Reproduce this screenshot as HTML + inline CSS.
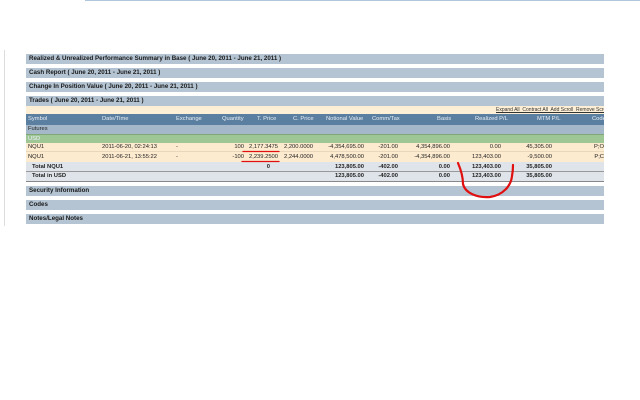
<!DOCTYPE html>
<html><head><meta charset="utf-8"><style>
*{margin:0;padding:0;box-sizing:border-box}
body{width:640px;height:400px;background:#fff;position:relative;overflow:hidden;font-family:"Liberation Sans",Arial,sans-serif;font-size:5.8px;color:#222}
.a{position:absolute}
.bar{position:absolute;left:26px;width:578px;height:10px;background:#b4c4d2;font-weight:bold;font-size:6.2px;line-height:10px;padding-left:3px;color:#1a1a1a}
.row{position:absolute;left:26px;width:578px}
.c{position:absolute;top:0;white-space:nowrap}
.r{text-align:right}
</style></head><body>
<div class="a" style="left:85px;top:0;width:555px;height:1px;background:#b0c6de"></div>
<div class="a" style="left:4px;top:50px;width:1px;height:176px;background:#ddd"></div>

<div class="bar" style="top:54px">Realized &amp; Unrealized Performance Summary in Base ( June 20, 2011 - June 21, 2011 )</div>
<div class="bar" style="top:68px">Cash Report ( June 20, 2011 - June 21, 2011 )</div>
<div class="bar" style="top:82px">Change In Position Value ( June 20, 2011 - June 21, 2011 )</div>
<div class="bar" style="top:96px">Trades ( June 20, 2011 - June 21, 2011 )</div>

<div class="row" style="top:106px;height:8px;background:#fdefd6"></div>
<div class="a" style="top:107px;left:496px;width:108px;overflow:hidden;font-size:5px;color:#333;text-decoration:underline;white-space:nowrap">Expand All&nbsp; Contract All&nbsp; Add Scroll&nbsp; Remove Scroll</div>

<div class="row" style="top:114px;height:11px;background:#5b7fa0;color:#e8eef4;line-height:11px">
<span class="c" style="left:2px">Symbol</span>
<span class="c" style="left:76px">Date/Time</span>
<span class="c" style="left:150px">Exchange</span>
<span class="c" style="left:196px">Quantity</span>
<span class="c" style="left:231px">T. Price</span>
<span class="c" style="left:267px">C. Price</span>
<span class="c" style="left:300px">Notional Value</span>
<span class="c" style="left:346px">Comm/Tax</span>
<span class="c" style="left:411px">Basis</span>
<span class="c" style="left:449px">Realized P/L</span>
<span class="c" style="left:511px">MTM P/L</span>
<span class="c" style="left:566px">Code</span>
</div>
<div class="row" style="top:125px;height:9px;background:#a4b8ca;line-height:9px"><span class="c" style="left:2px">Futures</span></div>
<div class="row" style="top:134px;height:9px;background:#9ec795;border-top:1px solid #7fa77a;line-height:8px;color:#eef"><span class="c" style="left:2px">USD</span></div>

<div class="row" style="top:143px;height:9px;background:#fdebcf;border-bottom:1px solid #e8d7bb;line-height:9px">
<span class="c" style="left:2px">NQU1</span>
<span class="c" style="left:76px">2011-06-20, 02:24:13</span>
<span class="c" style="left:150px">-</span>
<span class="c r" style="right:360px">100</span>
<span class="c r" style="right:326px">2,177.3475</span>
<span class="c r" style="right:291px">2,200.0000</span>
<span class="c r" style="right:240px">-4,354,695.00</span>
<span class="c r" style="right:206px">-201.00</span>
<span class="c r" style="right:154px">4,354,896.00</span>
<span class="c r" style="right:103px">0.00</span>
<span class="c r" style="right:52px">45,305.00</span>
<span class="c r" style="right:0">P;O</span>
</div>
<div class="row" style="top:152px;height:10px;background:#fdebcf;line-height:10px">
<span class="c" style="left:2px">NQU1</span>
<span class="c" style="left:76px">2011-06-21, 13:55:22</span>
<span class="c" style="left:150px">-</span>
<span class="c r" style="right:360px">-100</span>
<span class="c r" style="right:326px">2,239.2500</span>
<span class="c r" style="right:291px">2,244.0000</span>
<span class="c r" style="right:240px">4,478,500.00</span>
<span class="c r" style="right:206px">-201.00</span>
<span class="c r" style="right:154px">-4,354,896.00</span>
<span class="c r" style="right:103px">123,403.00</span>
<span class="c r" style="right:52px">-9,500.00</span>
<span class="c r" style="right:0">P;C</span>
</div>
<div class="row" style="top:162px;height:10px;background:#dfe4ea;border-bottom:1px solid #999;line-height:10px;font-weight:bold">
<span class="c" style="left:6px">Total NQU1</span>
<span class="c r" style="right:334px">0</span>
<span class="c r" style="right:240px">123,805.00</span>
<span class="c r" style="right:206px">-402.00</span>
<span class="c r" style="right:154px">0.00</span>
<span class="c r" style="right:103px">123,403.00</span>
<span class="c r" style="right:52px">35,805.00</span>
</div>
<div class="row" style="top:172px;height:10px;background:#dfe4ea;border-bottom:1px solid #888;line-height:9px;font-weight:bold">
<span class="c" style="left:6px">Total in USD</span>
<span class="c r" style="right:240px">123,805.00</span>
<span class="c r" style="right:206px">-402.00</span>
<span class="c r" style="right:154px">0.00</span>
<span class="c r" style="right:103px">123,403.00</span>
<span class="c r" style="right:52px">35,805.00</span>
</div>

<div class="bar" style="top:186px">Security Information</div>
<div class="bar" style="top:200px">Codes</div>
<div class="bar" style="top:214px">Notes/Legal Notes</div>

<svg class="a" style="left:0;top:0" width="640" height="400" viewBox="0 0 640 400">
<g fill="none" stroke="#e01010" stroke-linecap="round">
<path d="M243 151.5 L279 151.5" stroke-width="1.3"/>
<path d="M242 161.5 L279 161.5" stroke-width="1.3"/>
<path d="M458 163 C461 170 463 177 463 184 C465 193 477 198 490 197 C503 195 511 186 512 176 C513 171 513 168 513 165" stroke-width="2.2"/>
</g>
</svg>
</body></html>
